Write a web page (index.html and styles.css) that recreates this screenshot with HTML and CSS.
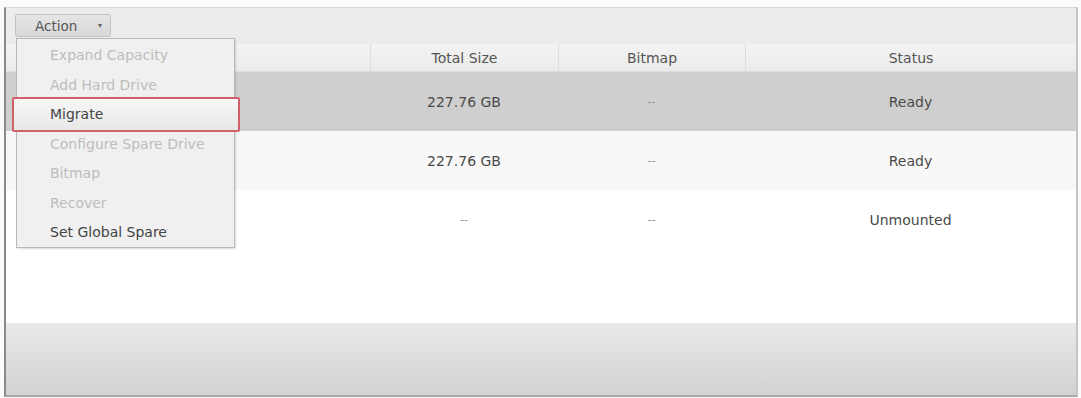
FILE: index.html
```html
<!DOCTYPE html>
<html>
<head>
<meta charset="utf-8">
<link rel="stylesheet" href="styles.css">
</head>
<body>
<div class="window">
  <div class="toolbar">
    <button class="action-btn"><span>Action</span><span class="caret">▾</span></button>
  </div>
  <div class="grid">
    <div class="row head">
      <div class="cell"></div>
      <div class="cell">Total Size</div>
      <div class="cell">Bitmap</div>
      <div class="cell">Status</div>
    </div>
    <div class="row sel">
      <div class="cell"></div>
      <div class="cell">227.76 GB</div>
      <div class="cell dash">--</div>
      <div class="cell">Ready</div>
    </div>
    <div class="row alt">
      <div class="cell"></div>
      <div class="cell">227.76 GB</div>
      <div class="cell dash">--</div>
      <div class="cell">Ready</div>
    </div>
    <div class="row">
      <div class="cell"></div>
      <div class="cell dash">--</div>
      <div class="cell dash">--</div>
      <div class="cell">Unmounted</div>
    </div>
  </div>
  <div class="spacer"></div>
  <div class="footer"></div>

  <div class="menu">
    <div class="item disabled">Expand Capacity</div>
    <div class="item disabled">Add Hard Drive</div>
    <div class="item active">Migrate</div>
    <div class="item disabled">Configure Spare Drive</div>
    <div class="item disabled">Bitmap</div>
    <div class="item disabled">Recover</div>
    <div class="item">Set Global Spare</div>
  </div>
</div>
</body>
</html>
```
FILE: styles.css
```css
html, body {
  margin: 0;
  padding: 0;
  background: #fbfbfb;
  font-family: "DejaVu Sans", "Open Sans", sans-serif;
  font-size: 14px;
  color: #4a4a4a;
}

.window {
  position: relative;
  margin: 7px 3px 2px 4px;
  height: 387px;
  display: flex;
  flex-direction: column;
  background: #ffffff;
  border-top: 1px solid #d8d8d8;
  border-left: 2px solid #8a8a8a;
  border-right: 2px solid #c4c4c4;
  border-bottom: 2px solid #a8a8a8;
}

.toolbar {
  height: 36px;
  flex: none;
  box-sizing: border-box;
  padding: 6px 9px;
  background: #ececec;
}

.action-btn {
  display: flex;
  align-items: center;
  justify-content: space-between;
  width: 96px;
  height: 23px;
  padding: 0 8px 0 19px;
  border: 1px solid #c4c4c4;
  border-radius: 2px;
  background: linear-gradient(#e6e6e6, #d8d8d8);
  font-family: inherit;
  font-size: 13.5px;
  color: #555;
}

.caret {
  font-size: 8px;
  color: #666;
}

.grid {
  flex: none;
}

.row {
  display: grid;
  grid-template-columns: 364px 188px 187px 1fr;
  height: 59px;
  align-items: center;
}

.row.head {
  height: 28px;
  box-sizing: border-box;
  background: linear-gradient(#f3f3f3, #ebebeb);
  border-bottom: 1px solid #dedede;
  color: #555;
}

.row.head .cell {
  height: 100%;
  display: flex;
  align-items: center;
  justify-content: center;
  border-left: 1px solid #dcdcdc;
}

.row.head .cell:first-child {
  border-left: none;
}

.row.sel {
  background: #cfcfcf;
}

.row.alt {
  background: #f8f8f8;
}

.cell {
  text-align: center;
}

.cell.dash {
  color: #8f8f8f;
  font-size: 11px;
}

.spacer {
  flex: 1;
}

.footer {
  height: 72px;
  flex: none;
  background: linear-gradient(#e9e9e9, #d2d2d2);
}

.menu {
  position: absolute;
  left: 10px;
  top: 30px;
  width: 219px;
  height: 210px;
  box-sizing: border-box;
  padding-top: 2px;
  background: #f0f0f0;
  border: 1px solid #b8b8b8;
  box-shadow: 1px 1px 2px rgba(0,0,0,0.15);
}

.item {
  height: 29.5px;
  line-height: 29.5px;
  padding-left: 33px;
  color: #444;
  font-size: 14px;
}

.item.disabled {
  color: #bdbdbd;
}

.item.active {
  margin: -3px -6px -2.5px -5px;
  padding-left: 36px;
  height: 35px;
  line-height: 31px;
  box-sizing: border-box;
  border: 2px solid #d1606a;
  border-radius: 2px;
  background: linear-gradient(#f6f6f6, #e8e8e8);
  color: #444;
}
```
